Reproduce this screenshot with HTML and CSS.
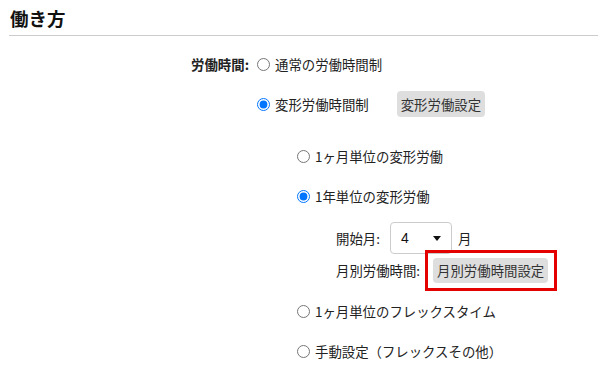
FILE: index.html
```html
<!DOCTYPE html>
<html>
	<head>
		<meta charset="UTF-8">
		<title>働き方</title>
		<link rel="stylesheet" href="styles.css">
	</head>
	<body>
		<h2 class="title">働き方</h2>
		<div class="field">
			<div class="label">労働時間:</div>
			<div class="options">
				<label class="opt">
					<input type="radio" name="kind"> 通常の労働時間制
				</label>
				<div class="opt">
					<label class="opt-in"><input type="radio" name="kind" checked> 変形労働時間制</label>
					<button class="btn btn-var">変形労働設定</button>
				</div>
				<div class="nested">
					<label class="opt">
						<input type="radio" name="var"> 1ヶ月単位の変形労働
					</label>
					<label class="opt">
						<input type="radio" name="var" checked> 1年単位の変形労働
					</label>
					<div class="subs">
						<div class="sub">
							<span class="sub-label">開始月:</span>
							<div class="select">
								<span>4</span>
								<span class="arrow"></span>
							</div>
							<span class="unit">月</span>
						</div>
						<div class="sub">
							<span class="sub-label label-month">月別労働時間:</span>
							<!-- 赤枠は注目箇所 -->
							<span class="mark">
								<button class="btn btn-month">月別労働時間設定</button>
							</span>
						</div>
					</div>
					<label class="opt">
						<input type="radio" name="var"> 1ヶ月単位のフレックスタイム
					</label>
					<label class="opt">
						<input type="radio" name="var"> 手動設定（フレックスその他）
					</label>
				</div>
			</div>
		</div>
	</body>
</html>
```

FILE: styles.css
```css
*{
	margin: 0;
	padding: 0;
	box-sizing: border-box;
}
body{
	font-family: "Noto Sans CJK JP", "Noto Sans", sans-serif;
	font-size: 13.4px;
	color: #222;
	background: #fff;
}
.title{
	margin-left: 9px;
	padding: 5px 0 4px 1px;
	font-size: 18.5px;
	line-height: 26px;
	font-weight: bold;
	color: #111;
	border-bottom: 1px solid #ccc;
}
.field{
	display: grid;
	grid-template-columns: 249px 1fr;
	column-gap: 7px;
	margin-top: 8px;
}
.field .label{
	text-align: right;
	font-weight: bold;
	height: 40px;
	line-height: 40px;
}
.opt{
	display: flex;
	align-items: center;
	height: 40px;
}
.opt-in{
	display: flex;
	align-items: center;
}
input[type=radio]{
	width: 13px;
	height: 13px;
	margin: 0 5px 0 1px;
}
.btn{
	font-family: inherit;
	font-size: 13.4px;
	color: #333;
	background: #dedede;
	border: none;
	border-radius: 4px;
	padding: 0 4px;
	height: 26px;
}
.btn-var{
	margin-left: 28px;
}
.nested{
	margin-top: 12px;
	padding-left: 40px;
}
.subs{
	padding-left: 40px;
	margin: 6px 0 5px;
}
.sub{
	display: flex;
	align-items: center;
	height: 32px;
}
.sub-label{
	margin-right: 10px;
}
.sub .label-month{
	margin-right: 13px;
}
.select{
	width: 62px;
	height: 32px;
	border: 1px solid #ccc;
	border-radius: 4px;
	display: flex;
	align-items: center;
	justify-content: space-between;
	padding: 0 10px 0 10px;
	font-family: "Liberation Sans", sans-serif;
	font-size: 14px;
	color: #111;
}
.arrow{
	width: 0;
	height: 0;
	border-left: 4px solid transparent;
	border-right: 4px solid transparent;
	border-top: 5px solid #111;
}
.unit{
	margin-left: 6px;
}
.mark{
	position: relative;
	display: inline-flex;
}
/* 赤枠はボタンに重ねて描く */
.mark::after{
	content: "";
	position: absolute;
	left: -8px;
	right: -9px;
	top: -8px;
	bottom: -8px;
	border: 3px solid #e50000;
}
.btn-month{
	height: 25px;
	padding: 0 4px;
}
```
